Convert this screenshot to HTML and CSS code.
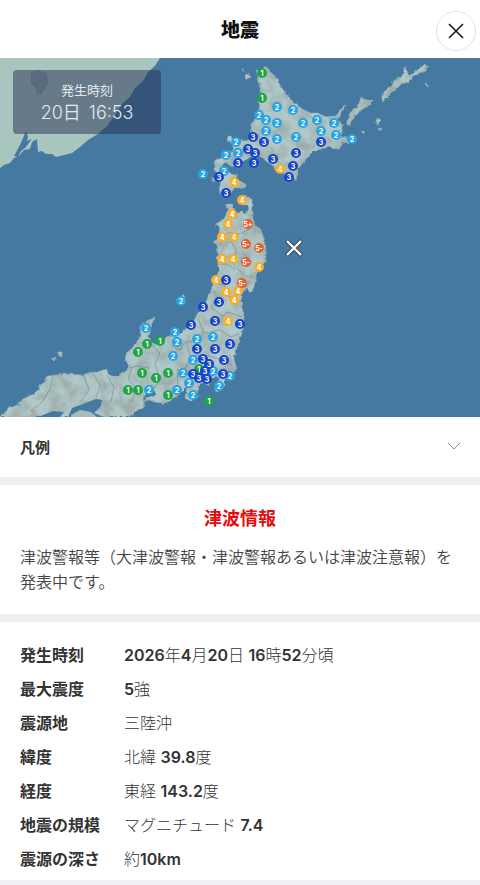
FILE: index.html
```html
<!DOCTYPE html>
<html lang="ja">
<head>
    <meta charset="UTF-8">
    <meta name="viewport" content="width=device-width, initial-scale=1">
    <title>地震</title>
    <link rel="stylesheet" href="styles.css">
</head>
<body>
<header class="header">
    <h1>地震</h1>
    <button type="button" class="close" aria-label="閉じる">
        <svg viewBox="0 0 16 16" width="16" height="16"><path d="M1 1L15 15M15 1L1 15"/></svg>
    </button>
</header>

<div class="map">
    <svg viewBox="0 58 480 359" role="img" aria-label="震度分布">
        <defs>
            <filter id="relief" x="0" y="0" width="100%" height="100%">
                <feTurbulence type="fractalNoise" baseFrequency="0.08" numOctaves="5" seed="8" result="noise"/>
                <feColorMatrix in="noise" type="matrix" values="0 0 0 0 0.34  0 0 0 0 0.41  0 0 0 0 0.41  2.6 0 0 0 -0.95" result="shade"/>
                <feComposite in="shade" in2="SourceGraphic" operator="in" result="hills"/>
                <feMerge result="ground">
                    <feMergeNode in="SourceGraphic"/>
                    <feMergeNode in="hills"/>
                </feMerge>
                <feTurbulence type="fractalNoise" baseFrequency="0.25" numOctaves="2" seed="3" result="coast"/>
                <feDisplacementMap in="ground" in2="coast" scale="4" xChannelSelector="R" yChannelSelector="G"/>
            </filter>
        </defs>
        <rect class="sea" x="0" y="58" width="480" height="359"/>

        <!-- continent -->
        <path class="continent" d="M0 58H160L155 66L148 72L143 81L135 88L130 97L122 104L115 115L107 126L98 134L88 140L80 147L72 153L64 155L56 157L52 154L46 154L42 151L38 152L37 139L32 142L30 149L24 150L19 156L14 158L10 163L4 165L0 168Z"/>
        <path class="lake" d="M31 72L38 70L47 73L48 84L44 90L41 95L37 94L35 87L31 84Z"/>
        <path class="inlet" d="M26 131L28 137L27 141L32 139L25 148L21 151L18 157L14 156L20 145Z"/>

        <g class="land" filter="url(#relief)">
            <!-- hokkaido -->
            <path d="M256 70L261 72L265 66L270 72L275 76L281 87L290 99L298 106L309 113L318 113L325 117L337 116L341 108L345 105L341 114L336 121L342 124L342 132L340 136L346 138L355 139L348 143L342 143L341 147L334 149L329 146L321 149L313 152L305 160L298 169L296 180L291 179L285 174L275 168L267 161L259 156L252 156L245 160L239 167L231 166L225 162L221 167L228 173L236 175L238 180L246 184L245 188L234 188L229 196L222 196L219 190L221 182L217 177L215 168L215 160L226 157L233 151L234 145L227 140L229 136L236 140L247 141L252 135L251 124L255 119L259 119L259 100L261 91L258 77Z"/>
            <path d="M242 67L244 69L243 72ZM246 74L250 75L249 79L246 78ZM212 177L215 180L213 182Z"/>
            <!-- northern islands -->
            <path d="M347 124L350 113L357 107L361 98L367 100L373 101L369 105L362 109L355 115L350 124Z"/>
            <path d="M382 99L384 92L390 87L395 80L402 77L405 67L409 75L418 70L424 64L428 66L425 71L416 74L409 82L402 84L393 91L388 97L383 101Z"/>
            <path d="M375 121L379 118L381 121L377 125ZM361 131L364 130L364 134ZM426 84L429 85L427 87ZM379 128L381 129L380 131Z"/>
            <!-- honshu -->
            <path d="M226 205L230 204L234 208L235 215L241 212L247 213L249 208L247 205L239 205L238 199L246 196L252 199L252 220L255 226L261 230L264 240L266 252L266 260L262 266L256 276L254 287L251 292L246 287L241 296L242 308L244 317L243 330L239 340L235 352L234 361L237 369L230 374L225 380L223 389L216 392L215 386L220 379L215 376L210 380L209 386L204 381L198 386L197 397L190 402L185 397L188 386L180 394L172 399L165 404L156 401L144 400L156 395L153 388L146 392L143 400L145 407L136 411L128 417L0 417L8 408L18 405L24 398L34 394L43 383L48 376L66 374L82 375L91 373L101 371L107 368L108 375L117 377L124 372L130 366L125 361L128 352L136 344L141 335L140 326L146 321L155 318L151 325L150 333L148 337L154 345L163 341L169 336L180 334L191 324L198 314L204 307L209 295L214 282L219 271L217 258L218 247L213 242L218 239L220 229L216 224L224 219L228 211Z"/>
            <!-- small islands -->
            <path d="M178 305L179 299L184 294L183 301ZM59 352L62 352L62 356L59 356ZM52 359L56 357L54 361Z"/>
        </g>
        <path class="inlet" d="M68 417L72 408L83 404L96 399L102 400L101 406L94 413L104 417ZM38 417L53 411L64 412L60 417Z"/>
        <path class="land-plain" d="M71 415L80 410L91 412L97 417H71Z"/>

        <!-- prefecture borders -->
        <path class="borders" d="M219 239L229 232L240 234L251 228M229 238L236 250L234 266L246 276L254 278M217 264L228 264L235 270M215 283L224 285L229 297L241 294M218 296L211 307L222 316L228 312L242 317M198 318L204 333L196 341L185 342L180 350L171 346M205 333L220 330L231 337L239 334M186 342L190 356L205 355L219 359L232 365M190 357L184 372L177 369L178 388M151 344L160 353L155 364L160 379L154 389M129 368L137 366L149 368M132 367L128 379L136 388L132 402M107 375L114 387L111 402M84 375L89 390L80 402M53 376L50 389L42 402L31 411M93 373L100 385L96 398M205 356L215 368L220 378M189 372L200 369L211 372"/>

        <g id="points"></g>

        <path class="center-edge" d="M288 242L300 254M300 242L288 254"/>
        <path class="center" d="M287 241L301 255M301 241L287 255"/>
    </svg>
    <div class="time">
        <span class="time-label">発生時刻</span>
        <span class="time-value"><span>20日</span><span>16:53</span></span>
    </div>
</div>

<button type="button" class="legend" aria-expanded="false">
    凡例
    <svg viewBox="0 0 12 8" width="12" height="8"><path d="M0 1L6 7L12 1"/></svg>
</button>

<section class="tsunami">
    <h2>津波情報</h2>
    <p>津波警報等（大津波警報・津波警報あるいは津波注意報）を発表中です。</p>
</section>

<section class="detail">
    <table>
        <tr><th scope="row">発生時刻</th><td><b>2026</b>年<b>4</b>月<b>20</b>日 <b>16</b>時<b>52</b>分頃</td></tr>
        <tr><th scope="row">最大震度</th><td><b>5</b>強</td></tr>
        <tr><th scope="row">震源地</th><td>三陸沖</td></tr>
        <tr><th scope="row">緯度</th><td>北緯 <b>39.8</b>度</td></tr>
        <tr><th scope="row">経度</th><td>東経 <b>143.2</b>度</td></tr>
        <tr><th scope="row">地震の規模</th><td>マグニチュード <b>7.4</b></td></tr>
        <tr><th scope="row">震源の深さ</th><td>約<b>10km</b></td></tr>
    </table>
</section>
<script src="map.js"></script>
</body>
</html>
```
FILE: styles.css
```css
* {
    box-sizing: border-box;
}

body {
    margin: 0;
    background-color: #efeff4;
    color: #333;
    font-family: Inter, "Noto Sans CJK JP", sans-serif;
    font-size: 16px;
}

h1, h2, p {
    margin: 0;
}

button {
    border: none;
    background-color: #fff;
    font-family: inherit;
    cursor: pointer;
}

svg {
    display: block;
    fill: none;
}

.header {
    display: grid;
    grid-template-columns: 40px 1fr 40px;
    align-items: center;
    height: 58px;
    padding: 4px 4px 0;
    background-color: #fff;
}

.header h1 {
    grid-column: 2;
    color: #111;
    font-size: 19px;
    line-height: 28px;
    font-weight: 900;
    text-align: center;
}

.close {
    display: flex;
    align-items: center;
    justify-content: center;
    width: 40px;
    height: 40px;
    padding: 0;
    border: 1px solid #e4e4e6;
    border-radius: 50%;
}

.close path {
    stroke: #111;
    stroke-width: 1.5;
}

/* map */
.map {
    position: relative;
}

.map svg {
    width: 100%;
}

.sea {
    fill: #4579a1;
}

.continent {
    fill: #a9c5c0;
}

.lake {
    fill: #8ba9a8;
}

.inlet {
    fill: #4579a1;
}

.land path {
    fill: #b0c8c8;
    stroke: #8da9ab;
    stroke-width: 0.6;
}

.land-plain {
    fill: #a5bcbc;
}

.borders {
    stroke: #647b7d;
    stroke-width: 0.6;
    stroke-opacity: 0.8;
}

.point text {
    fill: #fff;
    font-family: Inter, sans-serif;
    font-size: 7px;
    font-weight: 700;
    text-anchor: middle;
}

.s1 circle { fill: #1fa547; }
.s2 circle { fill: #27a5e2; }
.s3 circle { fill: #1744c8; }
.s4 circle { fill: #f9ae27; }
.s5 circle { fill: #e2622f; }

.center {
    stroke: #fff;
    stroke-width: 2.4;
}

.center-edge {
    stroke: #34495c;
    stroke-width: 4.4;
    stroke-linecap: square;
}

.time {
    position: absolute;
    top: 12px;
    left: 13px;
    display: flex;
    flex-direction: column;
    align-items: center;
    width: 148px;
    height: 64px;
    padding-top: 10px;
    border-radius: 4px;
    background-color: rgba(38, 47, 82, 0.5);
    color: #e3e9ee;
}

.time-label {
    font-size: 13px;
    line-height: 20px;
}

.time-value {
    display: flex;
    gap: 8px;
    font-size: 18px;
    line-height: 26px;
    font-weight: 350;
}

/* legend */
.legend {
    display: flex;
    align-items: center;
    justify-content: space-between;
    width: 100%;
    height: 60px;
    padding: 0 20px 2px;
    color: #333;
    font-size: 15px;
    font-weight: 700;
}

.legend path {
    stroke: #888;
}

/* tsunami */
.tsunami {
    margin-top: 8px;
    padding: 20px 20px 19px;
    background-color: #fff;
}

.tsunami h2 {
    color: #e60c0c;
    font-size: 18px;
    line-height: 28px;
    font-weight: 700;
    text-align: center;
}

.tsunami p {
    margin-top: 12px;
    color: #444;
    font-size: 16px;
    line-height: 25px;
    font-weight: 350;
}

/* detail */
.detail {
    margin-top: 8px;
    padding: 16px 20px 4px;
    background-color: #fff;
}

.detail table {
    border-collapse: collapse;
}

.detail tr {
    height: 34px;
}

.detail th, .detail td {
    padding: 0;
    font-size: 16px;
    line-height: 24px;
    text-align: left;
    white-space: nowrap;
}

.detail th {
    width: 104px;
    font-weight: 700;
}

.detail td {
    font-weight: 300;
}

.detail b {
    font-weight: 600;
}
```
FILE: map.js
```js
// observed intensity: x, y of each station
const points = {
    '2': [[277,107],[293,110],[259,115],[266,120],[277,123],[303,123],[317,120],[334,123],[321,131],[336,135],
        [352,139],[266,131],[296,137],[277,139],[236,142],[238,153],[226,155],[203,174],[224,171],
        [181,301],[146,328],[175,332],[177,342],[197,339],[213,337],[173,356],[193,360],[183,373],[213,371],
        [230,376],[189,383],[219,386],[177,390],[193,395],[149,390]],
    '1': [[262,73],[262,98],[160,341],[147,344],[138,352],[142,373],[168,373],[156,378],[199,369],[128,390],
        [138,390],[168,395],[209,401]],
    '3': [[253,137],[264,142],[321,142],[248,149],[255,153],[296,153],[273,159],[238,163],[254,163],[293,166],
        [289,177],[219,177],[226,193],[226,280],[219,302],[203,307],[215,321],[191,325],[240,324],[230,344],
        [215,349],[197,349],[203,359],[209,364],[224,360],[193,374],[205,371],[199,378],[207,379],[223,374]],
    '4': [[280,169],[234,182],[242,200],[232,214],[228,224],[222,237],[234,237],[222,259],[233,259],[259,267],
        [216,280],[226,292],[238,291],[234,300],[228,321]],
    '5-': [[246,244],[259,248],[246,262],[242,283]],
    '5+': [[248,224]]
};

let data = '';
for (const level in points) {
    for (const [x, y] of points[level]) {
        data += '<g class="point s' + level[0] + '">';
        data += '<circle cx="' + x + '" cy="' + y + '" r="5"/>';
        data += '<text x="' + x + '" y="' + (y + 3) + '">' + level + '</text>';
        data += '</g>';
    }
}
document.getElementById('points').innerHTML = data;
```
